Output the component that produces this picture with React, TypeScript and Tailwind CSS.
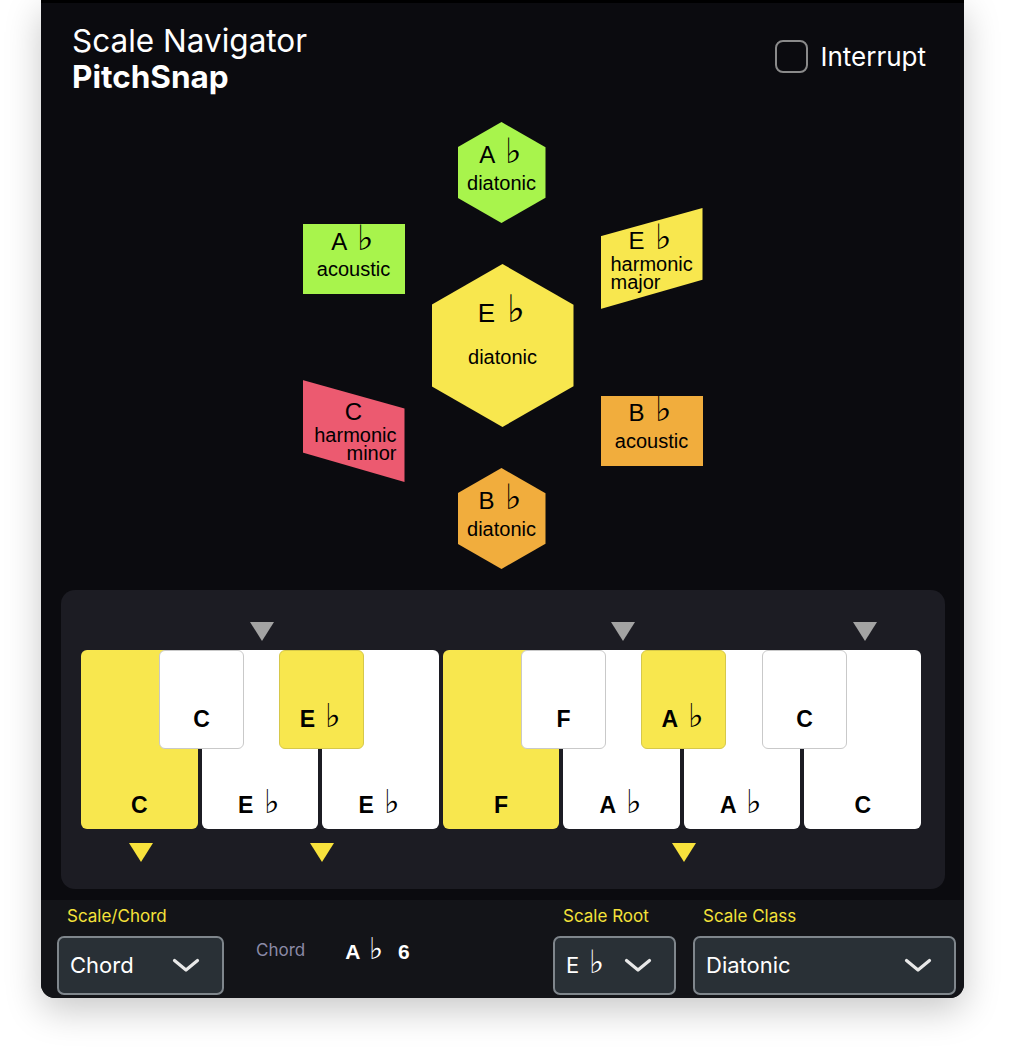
import React from 'react';

const ui = { fontFamily: 'Inter, "Liberation Sans", sans-serif' };
const arial = { fontFamily: '"Liberation Sans", Arial, "DejaVu Sans", sans-serif' };
const flat = { fontFamily: '"DejaVu Sans", sans-serif', fontWeight: 200, fontSize: '1.45em', lineHeight: 0, marginLeft: '0.12em', marginRight: '0.06em' };

function Note({ n, flatSign }: { n: string; flatSign?: boolean }) {
  return (
    <span>
      {n}
      {flatSign && (
        <>
          {' '}
          <span style={flat}>♭</span>
        </>
      )}
    </span>
  );
}

const whiteKeys = [
  { n: 'C', f: false, on: true },
  { n: 'E', f: true, on: false },
  { n: 'E', f: true, on: false },
  { n: 'F', f: false, on: true },
  { n: 'A', f: true, on: false },
  { n: 'A', f: true, on: false },
  { n: 'C', f: false, on: false },
];

const blackKeys = [
  { n: 'C', f: false, on: false, left: 78 },
  { n: 'E', f: true, on: true, left: 198 },
  { n: 'F', f: false, on: false, left: 440 },
  { n: 'A', f: true, on: true, left: 560 },
  { n: 'C', f: false, on: false, left: 681 },
];

function Chevron() {
  return (
    <svg width="28" height="15" viewBox="0 0 28 15" fill="none">
      <polyline points="2.5,2.5 14,12 25.5,2.5" stroke="#e8e8e8" strokeWidth="3.2" strokeLinecap="round" strokeLinejoin="round" />
    </svg>
  );
}

export default function App() {
  return (
    <div className="w-[1011px] h-[1054px] bg-white overflow-hidden">
      <div className="ml-[41px] w-[923px] h-[998px] bg-[#0b0b0f] border-t-[3px] border-[#000] rounded-b-[14px] shadow-[0_12px_36px_rgba(0,0,0,0.22)] overflow-hidden flex flex-col">
        {/* header */}
        <div className="h-[107px] flex justify-between px-[31px] pt-[20px] text-white" style={ui}>
          <div>
            <div className="text-[31.5px] leading-[36px]">Scale Navigator</div>
            <div className="text-[31.5px] leading-[36px] font-bold">PitchSnap</div>
          </div>
          <div className="flex items-center gap-[12px] h-[33px] mt-[17px] mr-[7px]">
            <div className="w-[33px] h-[33px] rounded-[8px] border-2 border-[#8a8a8a]" />
            <span className="text-[26px] leading-none">Interrupt</span>
          </div>
        </div>

        {/* scale map */}
        <div className="h-[480px]" style={arial}>
          <div className="relative w-[400px] h-full mx-auto text-black">
            <div className="absolute left-[155px] top-[12px] w-[88px] h-[101px] bg-[#a8f44c] [clip-path:polygon(50%_0%,100%_25%,100%_75%,50%_100%,0%_75%,0%_25%)] flex flex-col items-center pt-[19px]">
              <div className="text-[24px] leading-[28px]"><Note n="A" flatSign /></div>
              <div className="text-[20px] leading-[22px] mt-[3px]">diatonic</div>
            </div>

            <div className="absolute left-0 top-[114px] w-[102px] h-[70px] bg-[#a8f44c] flex flex-col items-center pt-[4px]">
              <div className="text-[24px] leading-[28px]"><Note n="A" flatSign /></div>
              <div className="text-[20px] leading-[22px] mt-[2px]">acoustic</div>
            </div>

            <div className="absolute left-[298px] top-[98px] w-[102px] h-[101px] bg-[#f8e74e] [clip-path:polygon(0%_28%,100%_0%,100%_71%,0%_100%)] flex flex-col pt-[19px]">
              <div className="text-[24px] leading-[28px] text-center"><Note n="E" flatSign /></div>
              <div className="text-[20px] leading-[18px] pl-[10px] pr-[8px]">harmonic major</div>
            </div>

            <div className="absolute left-[129px] top-[154px] w-[142px] h-[163px] bg-[#f8e74e] [clip-path:polygon(50%_0%,100%_25%,100%_75%,50%_100%,0%_75%,0%_25%)] flex flex-col items-center pt-[34px]">
              <div className="text-[26px] leading-[30px]"><Note n="E" flatSign /></div>
              <div className="text-[20px] leading-[22px] mt-[18px]">diatonic</div>
            </div>

            <div className="absolute left-0 top-[270px] w-[102px] h-[102px] bg-[#ec5a70] [clip-path:polygon(0%_0%,100%_28%,100%_100%,0%_71%)] flex flex-col pt-[18px]">
              <div className="text-[24px] leading-[28px] text-center">C</div>
              <div className="text-[20px] leading-[18px] text-right pl-[8px] pr-[8px]">harmonic minor</div>
            </div>

            <div className="absolute left-[298px] top-[286px] w-[102px] h-[70px] bg-[#f1ad3d] flex flex-col items-center pt-[3px]">
              <div className="text-[24px] leading-[28px]"><Note n="B" flatSign /></div>
              <div className="text-[20px] leading-[22px] mt-[3px]">acoustic</div>
            </div>

            <div className="absolute left-[155px] top-[358px] w-[88px] h-[101px] bg-[#f1ad3d] [clip-path:polygon(50%_0%,100%_25%,100%_75%,50%_100%,0%_75%,0%_25%)] flex flex-col items-center pt-[19px]">
              <div className="text-[24px] leading-[28px]"><Note n="B" flatSign /></div>
              <div className="text-[20px] leading-[22px] mt-[3px]">diatonic</div>
            </div>
          </div>
        </div>

        {/* keyboard */}
        <div className="mx-[20px] w-[884px] h-[299px] rounded-[14px] bg-[#1c1c23] pt-[32px] pl-[20px]" style={arial}>
          <div className="relative w-[840px] h-[19px]">
            {[169, 530, 772].map((l) => (
              <div key={l} className="absolute top-0 w-0 h-0 border-l-[12px] border-r-[12px] border-t-[19px] border-l-transparent border-r-transparent border-t-[#a3a3a3]" style={{ left: l }} />
            ))}
          </div>
          <div className="relative w-[840px] h-[179px] mt-[9px] flex gap-[4px]">
            {whiteKeys.map((k, i) => (
              <div key={i} className={`flex-1 rounded-[6px] flex items-end justify-center pb-[12px] text-[23px] leading-none font-bold text-black ${k.on ? 'bg-[#f8e74e]' : 'bg-white'}`}>
                <Note n={k.n} flatSign={k.f} />
              </div>
            ))}
            {blackKeys.map((k, i) => (
              <div key={i} className={`absolute top-0 w-[85px] h-[99px] rounded-[6px] border-[1.5px] flex items-end justify-center pb-[17px] text-[23px] leading-none font-bold text-black ${k.on ? 'bg-[#f8e74e] border-[#d6c84a]' : 'bg-white border-[#c9c9c9]'}`} style={{ left: k.left }}>
                <Note n={k.n} flatSign={k.f} />
              </div>
            ))}
          </div>
          <div className="relative w-[840px] h-[19px] mt-[14px]">
            {[48, 229, 591].map((l) => (
              <div key={l} className="absolute top-0 w-0 h-0 border-l-[12px] border-r-[12px] border-t-[19px] border-l-transparent border-r-transparent border-t-[#f8e23c]" style={{ left: l }} />
            ))}
          </div>
        </div>

        {/* bottom bar */}
        <div className="mt-[11px] flex-1 bg-[#131418] flex pl-[16px] pr-[8px] pt-[6px]" style={ui}>
          <div className="flex flex-col">
            <span className="text-[17px] leading-[21px] text-[#f5e23a] pl-[10px]">Scale/Chord</span>
            <div className="mt-[9px] w-[167px] h-[59px] rounded-[7px] border-2 border-[#7f868c] bg-[#293036] flex items-center justify-between pl-[11px] pr-[22px] text-white text-[22px]">
              <span>Chord</span>
              <Chevron />
            </div>
          </div>
          <div className="flex items-start gap-[40px] ml-[32px] pt-[33px]">
            <span className="text-[17px] leading-[22px] text-[#8b8aa6]">Chord</span>
            <span className="text-[21px] leading-[26px] font-bold text-white" style={{ fontFamily: '"Liberation Sans", Arial, sans-serif' }}>
              A <span style={{ ...flat, marginRight: '0.3em' }}>♭</span> 6
            </span>
          </div>
          <div className="flex-1" />
          <div className="flex flex-col">
            <span className="text-[17px] leading-[21px] text-[#f5e23a] pl-[10px]">Scale Root</span>
            <div className="mt-[9px] w-[123px] h-[59px] rounded-[7px] border-2 border-[#7f868c] bg-[#293036] flex items-center justify-between pl-[11px] pr-[22px] text-white text-[22px]">
              <span>E <span style={flat}>♭</span></span>
              <Chevron />
            </div>
          </div>
          <div className="flex flex-col ml-[17px]">
            <span className="text-[17px] leading-[21px] text-[#f5e23a] pl-[10px]">Scale Class</span>
            <div className="mt-[9px] w-[263px] h-[59px] rounded-[7px] border-2 border-[#7f868c] bg-[#293036] flex items-center justify-between pl-[11px] pr-[22px] text-white text-[22px]">
              <span>Diatonic</span>
              <Chevron />
            </div>
          </div>
        </div>
      </div>
    </div>
  );
}
